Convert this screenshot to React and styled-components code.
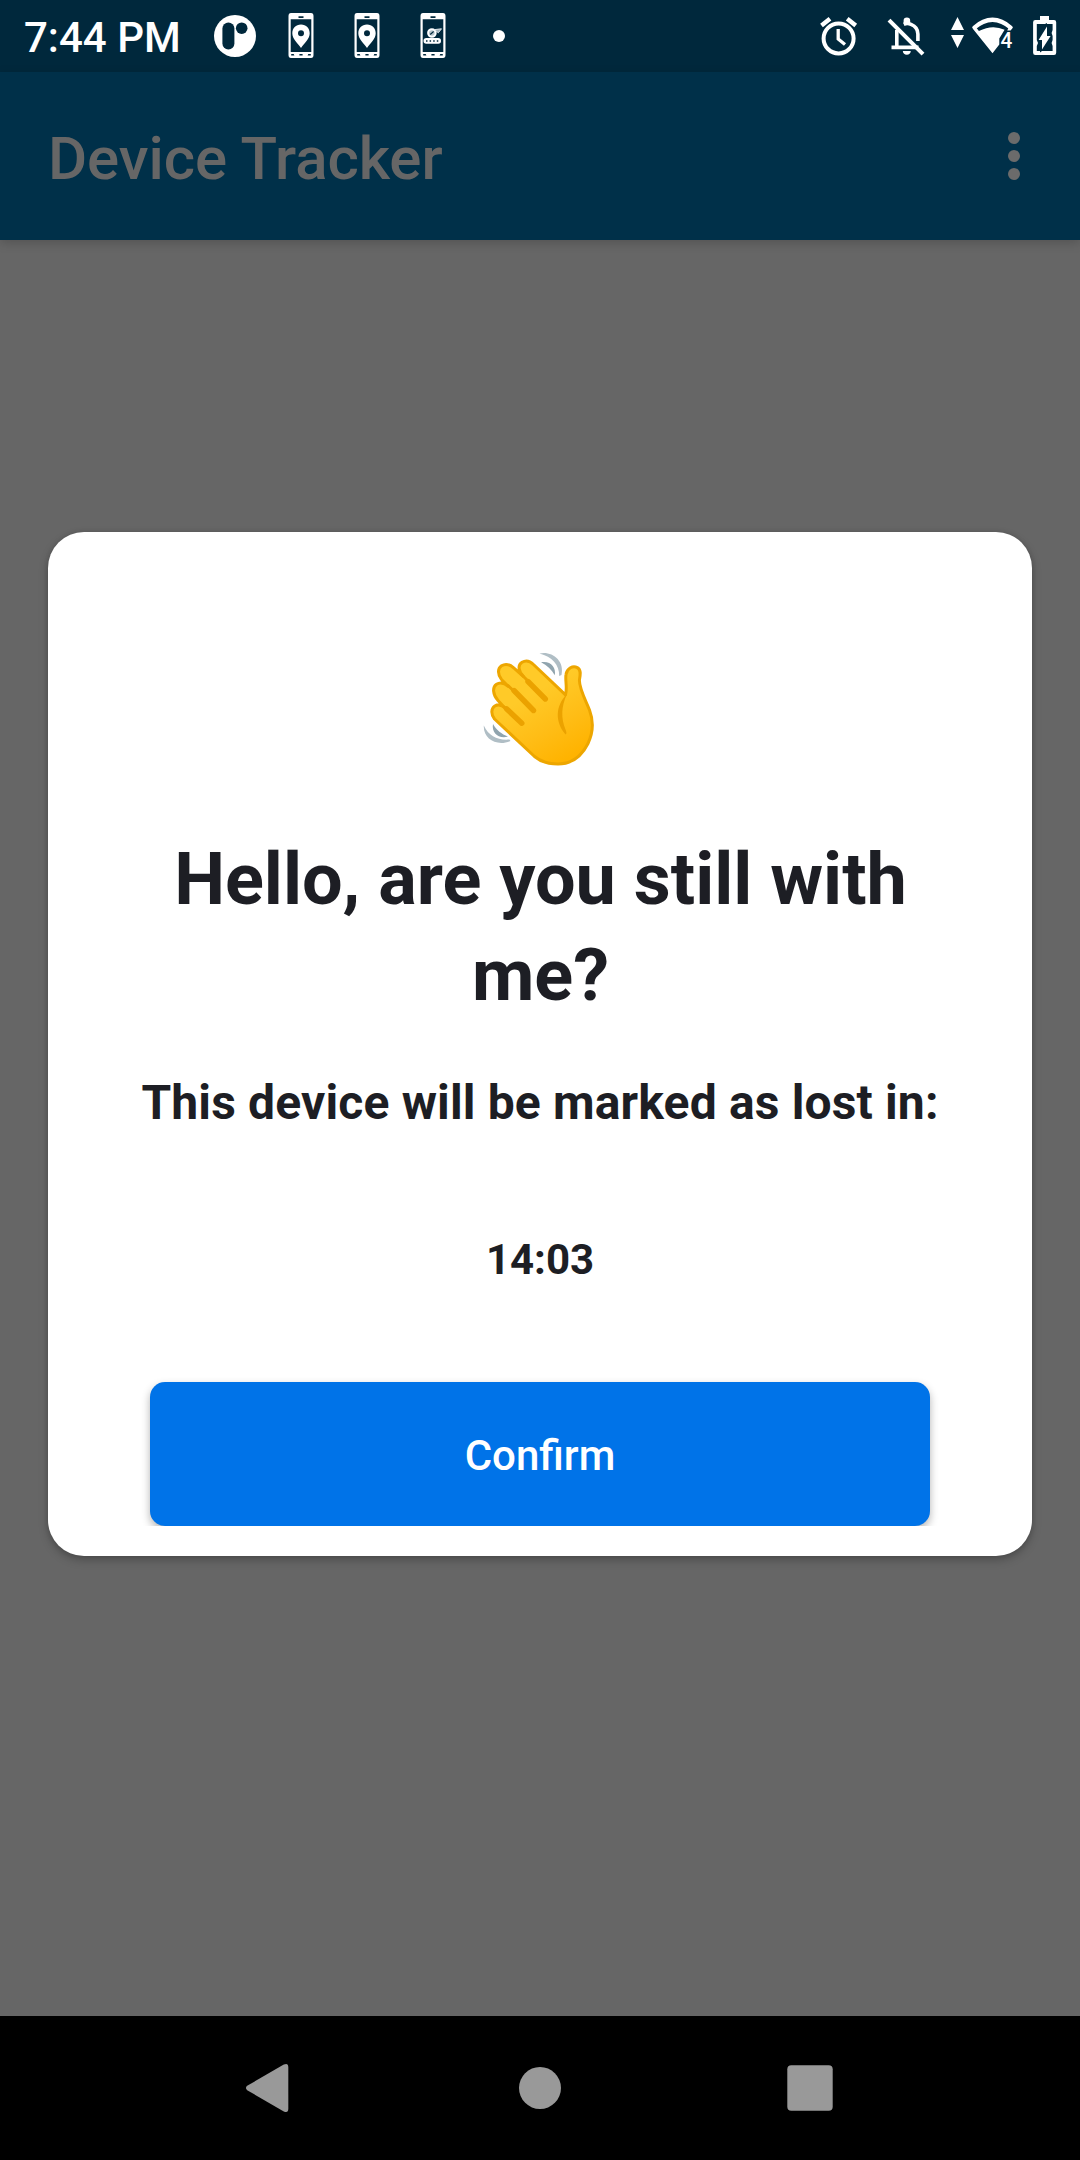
import React from "react";
import styled, { createGlobalStyle } from "styled-components";

const GlobalStyle = createGlobalStyle`
  * { box-sizing: border-box; }
  html, body { margin: 0; padding: 0; background: #666; }
  body { font-family: Roboto, "Noto Sans", sans-serif; }
`;

const Screen = styled.div`
  width: 1080px;
  height: 2160px;
  display: flex;
  flex-direction: column;
  background: #666666;
  overflow: hidden;
`;

const StatusBar = styled.header`
  flex: none;
  height: 72px;
  padding: 0 23px 0 24px;
  display: flex;
  align-items: center;
  background: #00283c;
  color: #fff;
`;

const Clock = styled.div`
  width: 190px;
  padding-top: 4px;
  font-size: 42px;
  line-height: 70px;
  font-weight: 500;
  white-space: nowrap;
`;

const Spacer = styled.div`
  flex: 1;
`;

const StatusIcon = styled.svg`
  display: block;
  flex: none;
  height: 72px;
  margin-right: ${(p) => p.$after || 0}px;
`;

const AppBar = styled.div`
  flex: none;
  height: 168px;
  padding: 0 60px 0 48px;
  display: flex;
  align-items: center;
  justify-content: space-between;
  background: #003049;
  box-shadow: 0 3px 10px rgba(0, 0, 0, 0.18);
  color: #666;
`;

const Title = styled.h1`
  margin: 0;
  padding-top: 5px;
  font-size: 60px;
  line-height: 70px;
  font-weight: 500;
  letter-spacing: -0.05px;
`;

const MenuButton = styled.button`
  display: flex;
  flex-direction: column;
  gap: 6px;
  padding: 0;
  border: 0;
  background: none;
`;

const MenuDot = styled.span`
  width: 12px;
  height: 12px;
  border-radius: 50%;
  background: #6b6b6b;
`;

const Content = styled.main`
  flex: 1;
  padding: 292px 48px 0;
`;

const Card = styled.section`
  height: 1024px;
  padding: 98px 72px 0;
  border-radius: 36px;
  background: #fff;
  box-shadow: 0 4px 10px rgba(0, 0, 0, 0.25), 0 0 5px rgba(0, 0, 0, 0.1);
  display: flex;
  flex-direction: column;
  align-items: center;
  color: #1d1e24;
  text-align: center;
`;

const Wave = styled.svg`
  display: block;
  flex: none;
  width: 160px;
  height: 150px;
`;

const Heading = styled.h2`
  margin: 52px 0 0;
  padding-left: 1px;
  font-size: 72px;
  line-height: 96px;
  font-weight: 700;
`;

const Message = styled.p`
  margin: 47px 0 0;
  font-size: 48px;
  line-height: 64px;
  font-weight: 700;
  letter-spacing: 0.15px;
  white-space: nowrap;
`;

const Timer = styled.div`
  margin-top: 97px;
  font-size: 42px;
  line-height: 56px;
  font-weight: 700;
`;

const ButtonFrame = styled.div`
  width: 816px;
  height: 162px;
  margin-top: 76px;
  padding: 18px 18px 0;
  overflow: hidden;
`;

const ConfirmButton = styled.button`
  display: block;
  width: 100%;
  height: 144px;
  padding: 4px 0 0;
  border: 0;
  border-radius: 15px;
  background: #0073e8;
  box-shadow: 0 4px 9px rgba(0, 0, 0, 0.3);
  color: #fff;
  font: 500 42px/56px Roboto, "Noto Sans", sans-serif;
`;

const NavBar = styled.nav`
  flex: none;
  height: 144px;
  padding: 0 135px;
  display: flex;
  background: #000;
`;

const NavItem = styled.button`
  flex: 1;
  display: flex;
  align-items: center;
  justify-content: center;
  padding: 0;
  border: 0;
  background: none;
`;

const NavIcon = styled.svg`
  display: block;
  width: 60px;
  height: 60px;
  fill: #999;
`;

function PhoneIcon({ after, children }) {
  return (
    <StatusIcon width="26" viewBox="0 0 26 72" $after={after}>
      <path
        fill="#fff"
        fillRule="evenodd"
        d="M3 13H23Q25.5 13 25.5 16V55Q25.5 58 23 58H3Q.5 58 .5 55V16Q.5 13 3 13ZM10.5 16.2V18H15.5V16.2ZM2.7 19.3V52H23.3V19.3ZM3.2 54V55.6H6.4L5.7 54ZM11.4 54V55.6H14.6V54ZM20.3 54L19.6 55.6H22.8V54Z"
      />
      {children}
    </StatusIcon>
  );
}

const Pin = () => (
  <path
    fill="#fff"
    fillRule="evenodd"
    d="M13 24.6C7.8 24.6 4.3 28.5 4.3 33.2C4.3 39 9.3 42.5 13 48C16.7 42.5 21.7 39 21.7 33.2C21.7 28.5 18.2 24.6 13 24.6ZM13 30.2A3 3 0 1 1 13 36.2A3 3 0 1 1 13 30.2Z"
  />
);

const Password = () => (
  <>
    <rect x="3.5" y="38" width="17.5" height="5.8" rx="2.8" fill="#fff" />
    <path d="M6 41H18.5" stroke="#00283c" strokeWidth="1.5" strokeDasharray="1.5 2.1" />
    <circle cx="11.9" cy="33" r="3.8" fill="#b9c5cb" stroke="#fff" strokeWidth="2" />
    <path d="M10.2 34.5L13.6 31.5" stroke="#00283c" strokeWidth="1.1" />
    <path d="M14.5 29.6L21.5 28.8L18.3 32.8Z" fill="#9fb0b9" stroke="#e2e7ea" strokeWidth="1" />
  </>
);

function NotificationIcons() {
  return (
    <>
      <StatusIcon width="42" viewBox="0 0 42 72" $after={32}>
        <circle cx="21" cy="36" r="21" fill="#fff" />
        <rect x="8.4" y="22.4" width="12" height="27" rx="6" fill="#00283c" />
        <circle cx="27.7" cy="28.2" r="5.8" fill="#00283c" />
      </StatusIcon>
      <PhoneIcon after={40}><Pin /></PhoneIcon>
      <PhoneIcon after={40}><Pin /></PhoneIcon>
      <PhoneIcon after={47}><Password /></PhoneIcon>
      <StatusIcon width="12" viewBox="0 0 12 72">
        <circle cx="6" cy="36" r="6" fill="#fff" />
      </StatusIcon>
    </>
  );
}

function SystemIcons() {
  return (
    <>
      <StatusIcon width="38" viewBox="0 0 38 72" $after={29}>
        <g fill="none" stroke="#fff">
          <circle cx="18.6" cy="38.4" r="15" strokeWidth="4" />
          <path d="M1.5 25.5L10 18.7M27.2 18.7L35.7 25.5" strokeWidth="4.4" />
          <path d="M18.2 29V38.9L25 44.5" strokeWidth="3.3" />
        </g>
      </StatusIcon>
      <StatusIcon width="40" viewBox="0 0 40 72" $after={24}>
        <g fill="none" stroke="#fff" strokeWidth="3.6">
          <path d="M9.8 30V47.4M4.5 47.4H31.5" />
          <path d="M16.8 24.3Q20.2 22.8 24 24.3Q30.9 27 30.9 34V41" />
          <path d="M2 20.2L36 54.2" strokeWidth="4" />
        </g>
        <path fill="#fff" d="M16.6 23.5V20.8A3.3 3.3 0 0 1 23.2 20.8V23.5ZM15.8 51H23.8Q23.3 54.8 19.8 54.8Q16.3 54.8 15.8 51Z" />
      </StatusIcon>
      <StatusIcon width="14" viewBox="0 0 14 72" $after={7}>
        <path fill="#fff" d="M6.5 17L13 30H0ZM0 35H13L6.5 48Z" />
      </StatusIcon>
      <StatusIcon width="42" viewBox="0 0 42 72" $after={19}>
        <path d="M1.8 28Q20.5 11.6 39.2 28" fill="none" stroke="#fff" strokeWidth="4.2" />
        <path fill="#fff" d="M0 27L3.4 26.5L6.9 31Q20.5 24 32.6 29.8L27.3 38.6V44.5L20.5 53.2L1 29ZM38 25L41 27.4L38.6 30.5H35.2Z" />
        <text x="28.6" y="48" fill="#fff" fontFamily="Roboto" fontSize="22" fontWeight="500" textLength="11.8" lengthAdjust="spacingAndGlyphs">4</text>
      </StatusIcon>
      <StatusIcon width="24" viewBox="0 0 24 72">
        <path
          fill="#fff"
          fillRule="evenodd"
          d="M7 16H16V20H21Q23.2 20 23.2 22.2V52.7Q23.2 55 21 55H2.3Q.1 55 .1 52.7V22.2Q.1 20 2.3 20H7ZM3.8 24V40L5 43L3.8 46V51H7V52.5L9 51H19.6V46L18.6 43L19.6 40V36L18.6 33L19.6 30V24H14V23L12 24ZM14 26.4V36.1H17.6L9 49.5V40H5.6Z"
        />
      </StatusIcon>
    </>
  );
}

function WavingHand() {
  return (
    <Wave viewBox="0 0 160 150" role="img" aria-label="waving hand">
      <defs>
        <linearGradient id="skin" x1="55" y1="45" x2="105" y2="130" gradientUnits="userSpaceOnUse">
          <stop offset="0.25" stopColor="#ffca28" />
          <stop offset="0.65" stopColor="#ffbd16" />
          <stop offset="1" stopColor="#ffb300" />
        </linearGradient>
      </defs>
      <path
        d="M74.5 126.5L34.5 89C30.8 84.5 31 78.5 34.8 76C38.5 73.8 42 75 45 78L38 70.5C32.6 64.5 32.2 57 36.5 54.2C40.5 51.6 45 53.5 48.5 56.5L41.5 49.5C37.4 44.5 37.5 38.5 41.5 35.8C46 33 50.5 35 54 38.2L63.5 46.5C58.3 41 57.5 35 62 32.3C66 29.8 70.5 31.5 73.5 34.5L105.5 64.8C107.5 58 105 50 106 44.5C107 38 113 35.3 117.3 37.6C121.5 40 120.2 45 119.5 49.5C118.5 57 125 69 129.5 80C134 92 132.5 104 128 113.5C121 127.5 110 134 98 134C89 134 80.5 131.5 74.5 126.5Z"
        fill="url(#skin)"
        stroke="#eda600"
        strokeWidth="3"
        strokeLinejoin="round"
      />
      <g fill="none" stroke="#eba200" strokeLinecap="round">
        <path d="M61.5 44.5L86 69M48 55.5L73.8 80.5M44 77L62.3 93.5" strokeWidth="3" />
        <path d="M68 51.5L85.3 69M54 60.5L73.5 80.5M46.5 78.8L61.8 93.2" strokeWidth="5.4" />
      </g>
      <path d="M107 64C95 76 95 92 105.5 104.5C107 104 106.5 102 105.5 99.5C101 88 101 77 107 64Z" fill="#eba200" />
      <g fill="#b0bec5">
        <path d="M79.5 23.5C91 20.5 105 30 101.5 45L99.2 46C99.5 35 92 26.5 79.5 23.5Z" />
        <path d="M23.8 95.5C23 109 37 117 50.5 111L49.5 109.5C38 110.5 29 106.5 23.8 95.5Z" />
      </g>
      <g fill="#90a4ae">
        <path d="M81 32.3C90 30.3 96.5 37 94.8 45.3C91.5 39.5 87 35.5 81 32.3Z" />
        <path d="M33 94C31.3 103 39 109.2 48 106.5C41.5 104 36.5 100.3 33 94Z" />
      </g>
    </Wave>
  );
}

export default function App() {
  return (
    <Screen>
      <GlobalStyle />
      <StatusBar>
        <Clock>7:44 PM</Clock>
        <NotificationIcons />
        <Spacer />
        <SystemIcons />
      </StatusBar>
      <AppBar>
        <Title>Device Tracker</Title>
        <MenuButton aria-label="More options">
          <MenuDot />
          <MenuDot />
          <MenuDot />
        </MenuButton>
      </AppBar>
      <Content>
        <Card>
          <WavingHand />
          <Heading>Hello, are you still with me?</Heading>
          <Message>This device will be marked as lost in:</Message>
          <Timer>14:03</Timer>
          <ButtonFrame>
            <ConfirmButton>Confirm</ConfirmButton>
          </ButtonFrame>
        </Card>
      </Content>
      <NavBar>
        <NavItem aria-label="Back">
          <NavIcon viewBox="0 0 60 60">
            <path d="M7.2 27.8L43.8 6.6Q48.1 4.5 48.3 9V51Q48.1 55.5 43.8 53.4L7.2 32.2Q4.7 30 7.2 27.8Z" />
          </NavIcon>
        </NavItem>
        <NavItem aria-label="Home">
          <NavIcon viewBox="0 0 60 60">
            <circle cx="30" cy="30" r="21" />
          </NavIcon>
        </NavItem>
        <NavItem aria-label="Recent apps">
          <NavIcon viewBox="0 0 60 60">
            <rect x="7.3" y="7.3" width="45.4" height="45.4" rx="4" />
          </NavIcon>
        </NavItem>
      </NavBar>
    </Screen>
  );
}
